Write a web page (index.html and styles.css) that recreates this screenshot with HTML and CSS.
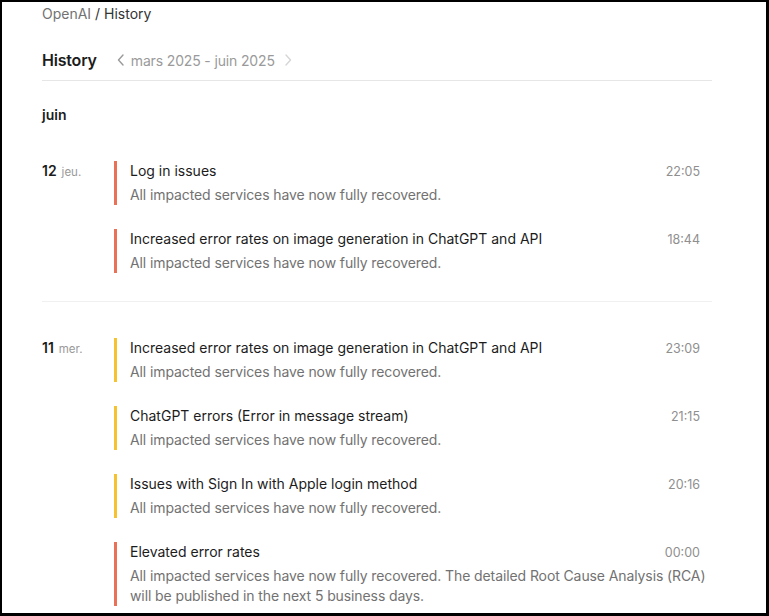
FILE: index.html
```html
<!DOCTYPE html>
<html lang="fr">
<head>
    <meta charset="UTF-8">
    <meta name="viewport" content="width=device-width, initial-scale=1.0">
    <title>OpenAI - History</title>
    <link rel="stylesheet" href="styles.css">
</head>
<body>
    <div class="frame">
        <div class="page">
            <div class="breadcrumb">
                <span class="crumb-root">OpenAI</span> / History
            </div>

            <div class="header">
                <h1>History</h1>
                <div class="range">
                    <svg class="chev" width="10" height="14" viewBox="0 0 10 14"><path d="M7 2 L2.5 7 L7 12" fill="none" stroke="#9a9a9a" stroke-width="1.4" stroke-linecap="round" stroke-linejoin="round"/></svg>
                    <span>mars 2025 - juin 2025</span>
                    <svg class="chev" width="10" height="14" viewBox="0 0 10 14"><path d="M3 2 L7.5 7 L3 12" fill="none" stroke="#d6d6d6" stroke-width="1.4" stroke-linecap="round" stroke-linejoin="round"/></svg>
                </div>
            </div>

            <h2 class="month">juin</h2>

            <div class="day first">
                <div class="day-label"><strong>12</strong> <span>jeu.</span></div>
                <div class="incidents">
                    <div class="incident major">
                        <div class="incident-top">
                            <span class="incident-title">Log in issues</span>
                            <span class="incident-time">22:05</span>
                        </div>
                        <p class="incident-desc">All impacted services have now fully recovered.</p>
                    </div>
                    <div class="incident major">
                        <div class="incident-top">
                            <span class="incident-title">Increased error rates on image generation in ChatGPT and API</span>
                            <span class="incident-time">18:44</span>
                        </div>
                        <p class="incident-desc">All impacted services have now fully recovered.</p>
                    </div>
                </div>
            </div>

            <div class="day">
                <div class="day-label"><strong>11</strong> <span>mer.</span></div>
                <div class="incidents">
                    <div class="incident minor">
                        <div class="incident-top">
                            <span class="incident-title">Increased error rates on image generation in ChatGPT and API</span>
                            <span class="incident-time">23:09</span>
                        </div>
                        <p class="incident-desc">All impacted services have now fully recovered.</p>
                    </div>
                    <div class="incident minor">
                        <div class="incident-top">
                            <span class="incident-title">ChatGPT errors (Error in message stream)</span>
                            <span class="incident-time">21:15</span>
                        </div>
                        <p class="incident-desc">All impacted services have now fully recovered.</p>
                    </div>
                    <div class="incident minor">
                        <div class="incident-top">
                            <span class="incident-title">Issues with Sign In with Apple login method</span>
                            <span class="incident-time">20:16</span>
                        </div>
                        <p class="incident-desc">All impacted services have now fully recovered.</p>
                    </div>
                    <div class="incident major">
                        <div class="incident-top">
                            <span class="incident-title">Elevated error rates</span>
                            <span class="incident-time">00:00</span>
                        </div>
                        <p class="incident-desc">All impacted services have now fully recovered. The detailed Root Cause Analysis (RCA) will be published in the next 5 business days.</p>
                    </div>
                </div>
            </div>
        </div>
    </div>
</body>
</html>
```

FILE: styles.css
```css
:root {
    --text-color: #1c1c1c;
    --muted: #727272;
    --faint: #9a9a9a;
    --line: #e6e6e6;
    --major: #ea7058;
    --minor: #f6c230;
}

body {
    margin: 0;
    font-family: Inter, 'Noto Sans', sans-serif;
    color: var(--text-color);
    background: #fff;
}

.frame {
    height: 616px;
    box-sizing: border-box;
    border: 2px solid #000;
    border-right-width: 3px;
    border-bottom-width: 3px;
    overflow: hidden;
}

.page {
    width: 670px;
    padding: 2px 0 0 40px;
}

.breadcrumb {
    font-size: 14px;
    line-height: 20px;
    color: #333;
}

.crumb-root {
    color: var(--muted);
}

.header {
    display: flex;
    align-items: center;
    margin-top: 24px;
    padding-bottom: 8px;
    border-bottom: 1px solid var(--line);
}

.header h1 {
    margin: 0;
    font-size: 16px;
    line-height: 24px;
    font-weight: 600;
    letter-spacing: -0.2px;
}

.range {
    display: flex;
    align-items: center;
    margin-left: 19px;
    font-size: 14px;
    letter-spacing: -0.15px;
    color: var(--faint);
}

.range span {
    margin: 0 8px 0 5px;
}

.month {
    margin: 24px 0 0;
    font-size: 14px;
    line-height: 20px;
    font-weight: 600;
}

.day {
    display: flex;
    padding: 36px 0 28px;
    border-bottom: 1px solid #f0f0f0;
}

.day:last-child {
    border-bottom: none;
}

.day-label {
    width: 72px;
    flex-shrink: 0;
    font-size: 14px;
    line-height: 20px;
}

.day-label strong {
    font-weight: 600;
}

.day-label span {
    font-size: 11.5px;
    color: var(--faint);
    margin-left: 1px;
}

.incidents {
    flex-grow: 1;
    display: flex;
    flex-direction: column;
    gap: 24px;
}

.incident {
    padding-left: 13px;
    border-left: 3px solid var(--major);
}

.incident.minor {
    border-left-color: var(--minor);
}

.incident-top {
    display: flex;
    justify-content: space-between;
    align-items: center;
    gap: 16px;
    padding-right: 12px;
}

.incident-title {
    font-size: 14px;
    line-height: 20px;
}

.incident-time {
    font-size: 12.5px;
    color: #8f8f8f;
}

.incident-desc {
    margin: 4px 0 0;
    font-size: 14px;
    line-height: 20px;
    letter-spacing: -0.1px;
    color: var(--muted);
}
```
